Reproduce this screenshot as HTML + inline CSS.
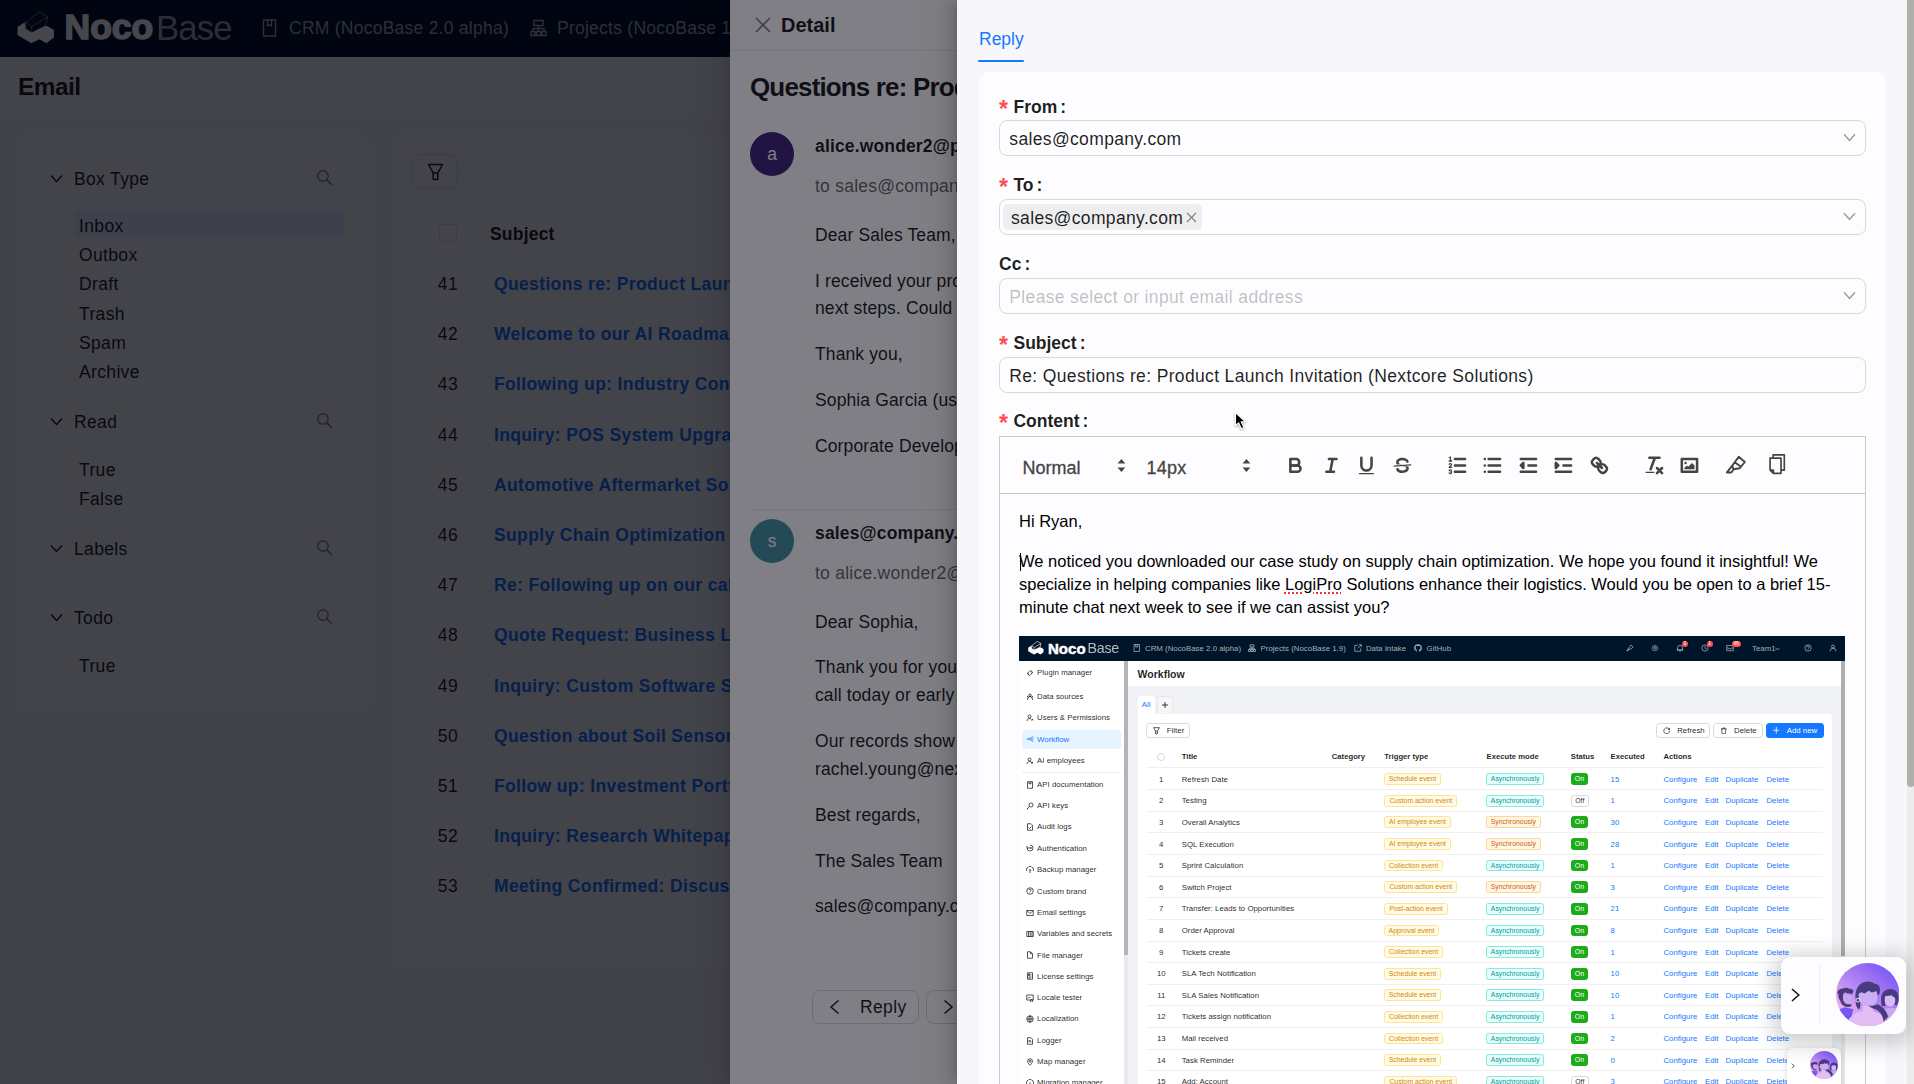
<!DOCTYPE html>
<html lang="en">
<head>
<meta charset="utf-8">
<title>NocoBase - Email</title>
<style>
*{box-sizing:border-box;margin:0;padding:0}
html,body{width:1914px;height:1084px;overflow:hidden;background:#f0f2f5}
body{font-family:"Liberation Sans",sans-serif;font-size:17.5px;color:rgba(0,0,0,.88);position:relative;letter-spacing:.35px}
.abs{position:absolute}
.t{position:absolute;white-space:nowrap;line-height:1}
b,.b{font-weight:700;letter-spacing:0}
svg{display:block}
/* ---------- base page ---------- */
#base{position:absolute;left:0;top:0;width:1914px;height:1084px;background:#f0f2f5}
#hdr{position:absolute;left:0;top:0;width:1914px;height:57px;background:#001529}
#hdr .t{color:rgba(255,255,255,.65)}
.card{position:absolute;background:#f5f6f9;border-radius:10px}
.mask{position:absolute;left:0;top:0;width:1914px;height:1084px;background:rgba(0,0,0,.45)}
.lnk{color:#1677ff;font-weight:700;letter-spacing:0}
#base>.t{margin-top:2px}#detail>.t,#hdr .t{margin-top:1.400px}
/* ---------- detail drawer ---------- */
#detail{position:absolute;left:730px;top:0;width:1184px;height:1084px;background:#fff;box-shadow:-6px 0 16px 0 rgba(0,0,0,.08),-3px 0 6px -4px rgba(0,0,0,.12),-9px 0 28px 8px rgba(0,0,0,.05)}
/* ---------- reply drawer ---------- */
#reply{position:absolute;left:957px;top:0;width:957px;height:1084px;background:#f7f7fa;overflow:hidden;box-shadow:-6px 0 16px 0 rgba(0,0,0,.14),-3px 0 6px -4px rgba(0,0,0,.14),-9px 0 28px 8px rgba(0,0,0,.06)}
#rcard{position:absolute;left:22px;top:72px;width:907px;height:1100px;background:#fdfdff;border-radius:10px}
.lab{position:absolute;left:42px;font-weight:700;letter-spacing:0;white-space:nowrap;line-height:1;font-size:17.5px}
.lab{margin-top:.7px}
.lab i{font-style:normal;color:#ff4d4f;font-weight:700;margin-right:5.500px;font-size:23px;line-height:0;position:relative;top:4.300px}
.lab s{text-decoration:none;margin-left:3px}
.sel{position:absolute;left:42px;width:867px;height:35.500px;margin-top:.3px;border:1px solid #d9d9d9;border-radius:8px;background:#fdfdff}
.sel .t{left:9.300px;top:9.300px}
.chev{position:absolute;right:9px;top:12.200px}
#editor{position:absolute;left:42px;top:436px;width:867px;height:700px;border:1px solid #ccc;letter-spacing:0}
#tb{position:absolute;left:0;top:0;width:865px;height:57px;border-bottom:1.500px solid #c6c6c6}
#ed{position:absolute;left:0;top:0;width:865px;height:700px;font-size:16.5px}
#ed p{position:absolute;left:19px;white-space:nowrap;line-height:23px;height:23px;margin-top:-11.500px;color:#000}
#ed p u{text-decoration:underline dotted #e33;text-decoration-thickness:1.500px;text-underline-offset:3px}
#shot{position:absolute;left:19px;top:199px;width:826px;height:520px;background:#fff;overflow:hidden}
#sb{position:absolute;left:949.500px;top:0;width:8px;height:1084px;background:#ececec}
#sb div{width:8px;height:787px;background:#b0b0aa;border-radius:0 0 4px 4px}
#ai{position:absolute;left:824px;top:957px;width:125px;height:76.500px;background:#fdfdff;border-radius:9px;box-shadow:0 4px 22px 6px rgba(0,0,0,.2)}
#shot{letter-spacing:.03px;color:rgba(0,0,0,.88)}
.tg{position:absolute;height:11.800px;border-radius:2.500px;font-size:6.900px;line-height:10.800px;text-align:center;white-space:nowrap;letter-spacing:0;border:.6px solid}
.tg.gold{background:#fffbe6;border-color:#ffe58f;color:#d48806}
.tg.cyan{background:#e6fffb;border-color:#87e8de;color:#08979c}
.tg.org{background:#fff7e6;border-color:#ffd591;color:#d4580a}
.tg.on{background:#1aad19;border-color:#1aad19;color:#fff}
.tg.off{background:#fff;border-color:#d9d9d9;color:rgba(0,0,0,.88)}
</style>
</head>
<body>
<div id="base">
  <div id="hdr">
    <svg class="abs" style="left:0;top:0" width="60" height="57" viewBox="0 0 60 57"><path d="M17.500 26.900 24.700 22.200 25.700 28.800 31.600 32.600 45.100 26 47.600 26.300 53.900 30.100V37.600L46.400 43.200 39.500 39.200 31.300 43.200 17.500 35.100Z" fill="#fff"/><path d="M25.700 22.500 38.800 11.900 47.600 16.900 45.700 25.700 31.600 32.600 25.700 28.800ZM25.700 22.500 31.800 26.500 47.600 16.900M31.800 26.500 31.600 32.600" fill="none" stroke="rgba(255,255,255,.45)" stroke-width=".9" stroke-linejoin="round"/></svg>
    <div class="t" style="left:64.500px;top:8.800px;font-size:35.500px;font-weight:700;letter-spacing:0;color:#fff;-webkit-text-stroke:1.5px #fff">Noco</div>
    <div class="t" style="left:156px;top:8.800px;font-size:35px;font-weight:400;letter-spacing:-1px;color:#fff;opacity:.62">Base</div>
    <svg class="abs" style="left:262px;top:19px" width="15" height="18" viewBox="0 0 15 18"><path d="M1.5 1h12v16h-12z" fill="none" stroke="rgba(255,255,255,.65)" stroke-width="1.4"/><path d="M5.5 1v6l2-1.5 2 1.5V1" fill="none" stroke="rgba(255,255,255,.65)" stroke-width="1.3"/></svg>
    <div class="t" style="left:289px;top:19px;letter-spacing:.25px">CRM (NocoBase 2.0 alpha)</div>
    <svg class="abs" style="left:530px;top:19px" width="17" height="18" viewBox="0 0 17 18"><g fill="none" stroke="rgba(255,255,255,.65)" stroke-width="1.4"><path d="M4 1.5h9v5H4zM1 12.5h4v4H1zM6.500 12.500h4v4h-4zM12 12.500h4v4h-4zM8.500 6.500v6M3 12.500v-3h11v3"/></g></svg>
    <div class="t" style="left:557px;top:19px;letter-spacing:.25px">Projects (NocoBase 1.9)</div>
  </div>
  <div class="abs" style="left:0;top:57px;width:1914px;height:58px;background:#f5f6f9"></div>
  <div class="t b" style="left:18px;top:73px;font-size:24.5px;letter-spacing:-.6px">Email</div>
  <div class="card" style="left:18px;top:135px;width:352px;height:575px"></div>
  <div class="card" style="left:392px;top:135px;width:1504px;height:833px"></div>
<svg class="abs" style="left:50px;top:173.5px" width="13" height="9" viewBox="0 0 13 9"><path d="M1 1.500 6.500 7.500 12 1.500" fill="none" stroke="rgba(0,0,0,.88)" stroke-width="1.4"/></svg><div class="t" style="left:74px;top:168.5px">Box Type</div><svg class="abs" style="left:316px;top:168.5px" width="17" height="17" viewBox="0 0 17 17"><circle cx="7" cy="7" r="5.200" fill="none" stroke="rgba(0,0,0,.45)" stroke-width="1.4"/><path d="M11 11l5 5" stroke="rgba(0,0,0,.45)" stroke-width="1.6"/></svg>
<svg class="abs" style="left:50px;top:417px" width="13" height="9" viewBox="0 0 13 9"><path d="M1 1.500 6.500 7.500 12 1.500" fill="none" stroke="rgba(0,0,0,.88)" stroke-width="1.4"/></svg><div class="t" style="left:74px;top:412px">Read</div><svg class="abs" style="left:316px;top:412px" width="17" height="17" viewBox="0 0 17 17"><circle cx="7" cy="7" r="5.200" fill="none" stroke="rgba(0,0,0,.45)" stroke-width="1.4"/><path d="M11 11l5 5" stroke="rgba(0,0,0,.45)" stroke-width="1.6"/></svg>
<svg class="abs" style="left:50px;top:544px" width="13" height="9" viewBox="0 0 13 9"><path d="M1 1.500 6.500 7.500 12 1.500" fill="none" stroke="rgba(0,0,0,.88)" stroke-width="1.4"/></svg><div class="t" style="left:74px;top:539px">Labels</div><svg class="abs" style="left:316px;top:539px" width="17" height="17" viewBox="0 0 17 17"><circle cx="7" cy="7" r="5.200" fill="none" stroke="rgba(0,0,0,.45)" stroke-width="1.4"/><path d="M11 11l5 5" stroke="rgba(0,0,0,.45)" stroke-width="1.6"/></svg>
<svg class="abs" style="left:50px;top:613px" width="13" height="9" viewBox="0 0 13 9"><path d="M1 1.500 6.500 7.500 12 1.500" fill="none" stroke="rgba(0,0,0,.88)" stroke-width="1.4"/></svg><div class="t" style="left:74px;top:608px">Todo</div><svg class="abs" style="left:316px;top:608px" width="17" height="17" viewBox="0 0 17 17"><circle cx="7" cy="7" r="5.200" fill="none" stroke="rgba(0,0,0,.45)" stroke-width="1.4"/><path d="M11 11l5 5" stroke="rgba(0,0,0,.45)" stroke-width="1.6"/></svg>
<div class="abs" style="left:75px;top:211px;width:270px;height:27px;background:#dcefff;border-radius:4px"></div>
<div class="t" style="left:79px;top:216px">Inbox</div>
<div class="t" style="left:79px;top:245px">Outbox</div>
<div class="t" style="left:79px;top:274px">Draft</div>
<div class="t" style="left:79px;top:303.5px">Trash</div>
<div class="t" style="left:79px;top:332.5px">Spam</div>
<div class="t" style="left:79px;top:361.5px">Archive</div>
<div class="t" style="left:79px;top:460px">True</div>
<div class="t" style="left:79px;top:489px">False</div>
<div class="t" style="left:79px;top:655.5px">True</div>
<div class="abs" style="left:412px;top:154px;width:46px;height:35px;border:1px solid #d9d9d9;border-radius:8px"></div>
<svg class="abs" style="left:427px;top:163px" width="17" height="18" viewBox="0 0 17 18"><path d="M1.500 1.500h14l-4.700 8.500v6.500H6.200V10Z M6.200 10h4.600" fill="none" stroke="rgba(0,0,0,.88)" stroke-width="1.5" stroke-linejoin="round"/></svg>
<div class="abs" style="left:412px;top:208px;width:1464px;height:50px;background:#f5f6f9;border-bottom:1px solid #eceef1"></div>
<div class="abs" style="left:439px;top:224px;width:18px;height:18px;border:1px solid #d9d9d9;border-radius:4px;background:#f8f9fb"></div>
<div class="t b" style="left:490px;top:224px;letter-spacing:.2px">Subject</div>
<div class="t" style="left:428px;width:40px;text-align:center;top:274px;letter-spacing:.4px">41</div><div class="t lnk" style="left:494px;top:274px;letter-spacing:.36px">Questions re: Product Launch Invitation (Nextcore Solutions)</div><div class="abs" style="left:412px;top:308px;width:1464px;height:1px;background:#eceef1"></div>
<div class="t" style="left:428px;width:40px;text-align:center;top:324px;letter-spacing:.4px">42</div><div class="t lnk" style="left:494px;top:324px;letter-spacing:.36px">Welcome to our AI Roadmap Webinar Series</div><div class="abs" style="left:412px;top:358px;width:1464px;height:1px;background:#eceef1"></div>
<div class="t" style="left:428px;width:40px;text-align:center;top:374px;letter-spacing:.4px">43</div><div class="t lnk" style="left:494px;top:374px;letter-spacing:.36px">Following up: Industry Conference Connection</div><div class="abs" style="left:412px;top:408px;width:1464px;height:1px;background:#eceef1"></div>
<div class="t" style="left:428px;width:40px;text-align:center;top:425px;letter-spacing:.4px">44</div><div class="t lnk" style="left:494px;top:425px;letter-spacing:.36px">Inquiry: POS System Upgrade for Retail Chain</div><div class="abs" style="left:412px;top:459px;width:1464px;height:1px;background:#eceef1"></div>
<div class="t" style="left:428px;width:40px;text-align:center;top:475px;letter-spacing:.4px">45</div><div class="t lnk" style="left:494px;top:475px;letter-spacing:.36px">Automotive Aftermarket Solutions Partnership</div><div class="abs" style="left:412px;top:509px;width:1464px;height:1px;background:#eceef1"></div>
<div class="t" style="left:428px;width:40px;text-align:center;top:525px;letter-spacing:.4px">46</div><div class="t lnk" style="left:494px;top:525px;letter-spacing:.36px">Supply Chain Optimization Case Study</div><div class="abs" style="left:412px;top:559px;width:1464px;height:1px;background:#eceef1"></div>
<div class="t" style="left:428px;width:40px;text-align:center;top:575px;letter-spacing:.4px">47</div><div class="t lnk" style="left:494px;top:575px;letter-spacing:.36px">Re: Following up on our call last week</div><div class="abs" style="left:412px;top:609px;width:1464px;height:1px;background:#eceef1"></div>
<div class="t" style="left:428px;width:40px;text-align:center;top:625px;letter-spacing:.4px">48</div><div class="t lnk" style="left:494px;top:625px;letter-spacing:.36px">Quote Request: Business Liability Insurance</div><div class="abs" style="left:412px;top:659px;width:1464px;height:1px;background:#eceef1"></div>
<div class="t" style="left:428px;width:40px;text-align:center;top:676px;letter-spacing:.4px">49</div><div class="t lnk" style="left:494px;top:676px;letter-spacing:.36px">Inquiry: Custom Software Solutions</div><div class="abs" style="left:412px;top:710px;width:1464px;height:1px;background:#eceef1"></div>
<div class="t" style="left:428px;width:40px;text-align:center;top:726px;letter-spacing:.4px">50</div><div class="t lnk" style="left:494px;top:726px;letter-spacing:.36px">Question about Soil Sensor Integration</div><div class="abs" style="left:412px;top:760px;width:1464px;height:1px;background:#eceef1"></div>
<div class="t" style="left:428px;width:40px;text-align:center;top:776px;letter-spacing:.4px">51</div><div class="t lnk" style="left:494px;top:776px;letter-spacing:.36px">Follow up: Investment Portfolio Review</div><div class="abs" style="left:412px;top:810px;width:1464px;height:1px;background:#eceef1"></div>
<div class="t" style="left:428px;width:40px;text-align:center;top:826px;letter-spacing:.4px">52</div><div class="t lnk" style="left:494px;top:826px;letter-spacing:.36px">Inquiry: Research Whitepaper Access</div><div class="abs" style="left:412px;top:860px;width:1464px;height:1px;background:#eceef1"></div>
<div class="t" style="left:428px;width:40px;text-align:center;top:876px;letter-spacing:.4px">53</div><div class="t lnk" style="left:494px;top:876px;letter-spacing:.36px">Meeting Confirmed: Discussion on Q3 Goals</div><div class="abs" style="left:412px;top:910px;width:1464px;height:1px;background:#eceef1"></div>
</div>
<div class="mask"></div>
<div id="detail">
  <svg class="abs" style="left:25px;top:17px" width="16" height="16" viewBox="0 0 16 16"><path d="M1 1l14 14M15 1 1 15" stroke="rgba(0,0,0,.5)" stroke-width="1.6" fill="none"/></svg>
  <div class="t b" style="left:51px;top:14px;font-size:20px">Detail</div>
  <div class="abs" style="left:0;top:50px;width:1184px;height:1px;background:rgba(5,5,5,.08)"></div>
  <div class="t b" style="left:20px;top:73px;font-size:26px;letter-spacing:-.85px">Questions re: Product Launch Invitation (Nextcore Solutions)</div>
  <div class="abs" style="left:20px;top:132px;width:44px;height:44px;border-radius:50%;background:#42277c"></div>
  <div class="t" style="left:20px;top:144.700px;width:44px;text-align:center;color:#fff;font-size:17.500px;letter-spacing:0">a</div>
  <div class="t b" style="left:85px;top:137px;letter-spacing:.15px">alice.wonder2@partner.com</div>
  <div class="t" style="left:85px;top:177px;color:rgba(0,0,0,.62);letter-spacing:.25px">to sales@company.com</div>
  <div class="t" style="left:85px;top:226px;letter-spacing:.12px">Dear Sales Team,</div>
  <div class="t" style="left:85px;top:272px;letter-spacing:.12px">I received your product launch invitation and had a few questions about</div>
  <div class="t" style="left:85px;top:299px;letter-spacing:.12px">next steps. Could you share more details?</div>
  <div class="t" style="left:85px;top:345px;letter-spacing:.12px">Thank you,</div>
  <div class="t" style="left:85px;top:391px;letter-spacing:.12px">Sophia Garcia (using Alice’s address)</div>
  <div class="t" style="left:85px;top:437px;letter-spacing:.12px">Corporate Development</div>
  <div class="abs" style="left:20px;top:509px;width:1144px;height:1px;background:rgba(5,5,5,.08)"></div>
  <div class="abs" style="left:20px;top:519px;width:44px;height:44px;border-radius:50%;background:#4a94a2"></div>
  <div class="t" style="left:20px;top:531.200px;width:44px;text-align:center;color:#fff;font-size:17.500px;letter-spacing:0">s</div>
  <div class="t b" style="left:85px;top:524px;letter-spacing:.15px">sales@company.com</div>
  <div class="t" style="left:85px;top:564px;color:rgba(0,0,0,.62);letter-spacing:.25px">to alice.wonder2@partner.com</div>
  <div class="t" style="left:85px;top:613px;letter-spacing:.12px">Dear Sophia,</div>
  <div class="t" style="left:85px;top:658px;letter-spacing:.12px">Thank you for your interest. We would be happy to set up a</div>
  <div class="t" style="left:85px;top:686px;letter-spacing:.12px">call today or early next week to walk you through it.</div>
  <div class="t" style="left:85px;top:732px;letter-spacing:.12px">Our records show your colleague</div>
  <div class="t" style="left:85px;top:760px;letter-spacing:.12px">rachel.young@nextcore.com</div>
  <div class="t" style="left:85px;top:806px;letter-spacing:.12px">Best regards,</div>
  <div class="t" style="left:85px;top:852px;letter-spacing:.12px">The Sales Team</div>
  <div class="t" style="left:85px;top:897px;letter-spacing:.12px">sales@company.com</div>
  <div class="abs" style="left:82px;top:990px;width:107px;height:34px;border:1px solid #d9d9d9;border-radius:8px"></div>
  <svg class="abs" style="left:99px;top:999px" width="11" height="16" viewBox="0 0 11 16"><path d="M9.500 1.500 2 8l7.500 6.500" fill="none" stroke="rgba(0,0,0,.88)" stroke-width="1.5"/></svg>
  <div class="t" style="left:130px;top:998px">Reply</div>
  <div class="abs" style="left:196px;top:990px;width:125px;height:34px;border:1px solid #d9d9d9;border-radius:8px"></div>
  <svg class="abs" style="left:213px;top:999px" width="11" height="16" viewBox="0 0 11 16"><path d="M1.500 1.500 9 8l-7.500 6.500" fill="none" stroke="rgba(0,0,0,.88)" stroke-width="1.5"/></svg>
  <div class="t" style="left:240px;top:998px">Forward</div>
</div>
<div class="mask" style="background:rgba(0,0,12,.5)"></div>
<div id="reply">
  <div class="t" style="left:22px;top:30.500px;color:#1677ff;letter-spacing:0">Reply</div>
  <div class="abs" style="left:21.400px;top:59.700px;width:46px;height:2.300px;background:#1677ff;border-radius:1px"></div>
  <div id="rcard"></div>
  <div class="lab" style="top:98px"><i>*</i>From<s>:</s></div>
  <div class="lab" style="top:176px"><i>*</i>To<s>:</s></div>
  <div class="lab" style="top:255px">Cc<s>:</s></div>
  <div class="lab" style="top:334px"><i>*</i>Subject<s>:</s></div>
  <div class="lab" style="top:412px"><i>*</i>Content<s>:</s></div>
  <div class="sel" style="top:120px"><div class="t">sales@company.com</div><svg class="chev" width="13" height="9" viewBox="0 0 13 9"><path d="M1 1.200 6.500 7.500 12 1.200" fill="none" stroke="rgba(0,0,0,.4)" stroke-width="1.300"/></svg></div>
  <div class="sel" style="top:199px"><div class="abs" style="left:3px;top:4px;width:199px;height:26px;border-radius:5px;background:rgba(0,0,0,.06)"></div><div class="t" style="left:11px">sales@company.com</div><svg class="abs" style="left:186px;top:12px" width="11" height="11" viewBox="0 0 11 11"><path d="M1 1l9 9M10 1 1 10" stroke="rgba(0,0,0,.45)" stroke-width="1.200"/></svg><svg class="chev" width="13" height="9" viewBox="0 0 13 9"><path d="M1 1.200 6.500 7.500 12 1.200" fill="none" stroke="rgba(0,0,0,.4)" stroke-width="1.300"/></svg></div>
  <div class="sel" style="top:278px"><div class="t" style="color:rgba(0,0,0,.25)">Please select or input email address</div><svg class="chev" width="13" height="9" viewBox="0 0 13 9"><path d="M1 1.200 6.500 7.500 12 1.200" fill="none" stroke="rgba(0,0,0,.4)" stroke-width="1.300"/></svg></div>
  <div class="sel" style="top:357px"><div class="t">Re: Questions re: Product Launch Invitation (Nextcore Solutions)</div></div>
  <div id="editor">
    <div id="tb"><svg class="abs" style="left:283.8px;top:16.9px" width="22.9" height="22.9" viewBox="0 0 18 18"><path stroke="#444" stroke-width="2" fill="none" stroke-linecap="round" stroke-linejoin="round" d="M5,4H9.500A2.500,2.500,0,0,1,12,6.500v0A2.500,2.500,0,0,1,9.500,9H5V4Z"/><path stroke="#444" stroke-width="2" fill="none" stroke-linecap="round" stroke-linejoin="round" d="M5,9h5.500A2.500,2.500,0,0,1,13,11.500v0A2.500,2.500,0,0,1,10.500,14H5V9Z"/></svg><svg class="abs" style="left:319.6px;top:16.9px" width="22.9" height="22.9" viewBox="0 0 18 18"><path stroke="#444" stroke-width="2" fill="none" stroke-linecap="round" stroke-linejoin="round" d="M7 4h6M5 14h6M8 14 10 4"/></svg><svg class="abs" style="left:355.3px;top:16.9px" width="22.9" height="22.9" viewBox="0 0 18 18"><path stroke="#444" stroke-width="2" fill="none" stroke-linecap="round" stroke-linejoin="round" d="M5,3V9a4.012,4.012,0,0,0,4,4H9a4.012,4.012,0,0,0,4-4V3"/><rect fill="#444" height="1" rx="0.500" ry="0.500" width="12" x="3" y="15"/></svg><svg class="abs" style="left:390.8px;top:16.9px" width="22.9" height="22.9" viewBox="0 0 18 18"><path stroke="#444" stroke-width="1" fill="none" stroke-linecap="round" stroke-linejoin="round" d="M15.500 8.500 2.500 9.500"/><path fill="#444" d="M9.007,8C6.542,7.791,6,7.519,6,6.500,6,5.792,7.283,5,9,5c1.571,0,2.765.679,2.969,1.309a1,1,0,0,0,1.900-.617C13.356,4.106,11.354,3,9,3,6.200,3,4,4.538,4,6.500a3.200,3.200,0,0,0,.5,1.843Z"/><path fill="#444" d="M8.984,10C11.457,10.208,12,10.479,12,11.500c0,0.708-1.283,1.500-3,1.500-1.571,0-2.765-.679-2.969-1.309a1,1,0,1,0-1.900.617C4.644,13.894,6.646,15,9,15c2.800,0,5-1.538,5-3.500a3.200,3.200,0,0,0-.5-1.843Z"/></svg><svg class="abs" style="left:445.6px;top:16.9px" width="22.9" height="22.9" viewBox="0 0 18 18"><path stroke="#444" stroke-width="2" fill="none" stroke-linecap="round" stroke-linejoin="round" d="M7 4h8M7 9h8M7 14h8"/><path stroke="#444" stroke-width="1" fill="none" stroke-linecap="round" stroke-linejoin="round" d="M2.500 5.500h2"/><path fill="#444" d="M3.500,6A0.500,0.500,0,0,1,3,5.500V3.085l-0.276.138A0.500,0.500,0,0,1,2.053,3c-0.124-.247-0.023-0.324.224-0.447l1-.5A0.500,0.500,0,0,1,4,2.500v3A0.500,0.500,0,0,1,3.500,6Z"/><path stroke="#444" stroke-width="1" fill="none" stroke-linecap="round" stroke-linejoin="round" d="M4.500,10.500h-2c0-.234,1.850-1.076,1.850-2.234A0.959,0.959,0,0,0,2.500,8.156"/><path stroke="#444" stroke-width="1" fill="none" stroke-linecap="round" stroke-linejoin="round" d="M2.500,14.846a0.959,0.959,0,0,0,1.850-.109A0.700,0.700,0,0,0,3.750,14a0.688,0.688,0,0,0,.6-0.736,0.959,0.959,0,0,0-1.850-.109"/></svg><svg class="abs" style="left:481.1px;top:16.9px" width="22.9" height="22.9" viewBox="0 0 18 18"><path stroke="#444" stroke-width="2" fill="none" stroke-linecap="round" stroke-linejoin="round" d="M6 4h9M6 9h9M6 14h9M3 4h0M3 9h0M3 14h0"/></svg><svg class="abs" style="left:516.5px;top:16.9px" width="22.9" height="22.9" viewBox="0 0 18 18"><path stroke="#444" stroke-width="2" fill="none" stroke-linecap="round" stroke-linejoin="round" d="M3 14h12M3 4h12M9 9h6"/><path stroke="#444" stroke-width="2" fill="none" stroke-linecap="round" stroke-linejoin="round" d="M5 7v4L3 9Z"/></svg><svg class="abs" style="left:552.3px;top:16.9px" width="22.9" height="22.9" viewBox="0 0 18 18"><path stroke="#444" stroke-width="2" fill="none" stroke-linecap="round" stroke-linejoin="round" d="M3 14h12M3 4h12M9 9h6"/><path stroke="#444" stroke-width="2" fill="none" stroke-linecap="round" stroke-linejoin="round" fill="#444" d="M3 7v4l2-2Z" style="fill:#444"/></svg><svg class="abs" style="left:587.8px;top:16.9px" width="22.9" height="22.9" viewBox="0 0 18 18"><path stroke="#444" stroke-width="2" fill="none" stroke-linecap="round" stroke-linejoin="round" d="M7 7l4 4"/><path stroke="#444" stroke-width="2" fill="none" stroke-linecap="round" stroke-linejoin="round" d="M8.900,4.577a3.476,3.476,0,0,1,.36,4.679A3.476,3.476,0,0,1,4.577,8.900C3.185,7.500,2.035,6.400,4.217,4.217S7.500,3.185,8.900,4.577Z"/><path stroke="#444" stroke-width="2" fill="none" stroke-linecap="round" stroke-linejoin="round" d="M13.423,9.100a3.476,3.476,0,0,0-4.679-.36,3.476,3.476,0,0,0,.36,4.679c1.392,1.392,2.500,2.542,4.679.36S14.815,10.500,13.423,9.100Z"/></svg><svg class="abs" style="left:642.8px;top:16.9px" width="22.9" height="22.9" viewBox="0 0 18 18"><path stroke="#444" stroke-width="2" fill="none" stroke-linecap="round" stroke-linejoin="round" d="M5 3h8M6 12 9.350 3M11 11l4 4M15 11l-4 4"/><rect fill="#444" height="1" rx="0.500" ry="0.500" width="7" x="2" y="14"/></svg><svg class="abs" style="left:677.8px;top:16.9px" width="22.9" height="22.9" viewBox="0 0 18 18"><rect stroke="#444" stroke-width="2" fill="none" stroke-linecap="round" stroke-linejoin="round" height="10" width="12" x="3" y="4"/><circle fill="#444" cx="6" cy="7" r="1"/><path fill="#444" d="M5 12V11L7 9 8 10 11 7 13 9V12Z"/></svg><svg class="abs" style="left:724.8px;top:16.9px" width="22.9" height="22.9" viewBox="0 0 18 18"><path stroke="#444" stroke-width="1.500" fill="none" stroke-linejoin="round" d="M10.800 2.200 15.600 6.300 11.600 11.200 6.800 12 5.600 9.300Z M7.700 6.500 12.600 10.100 M6.800 12 5 14.500H1.500L5.600 9.300"/></svg><svg class="abs" style="left:765.5px;top:15.1px" width="22.9" height="22.9" viewBox="0 0 18 18"><path stroke="#444" stroke-width="1.300" fill="none" stroke-linejoin="round" d="M3.200 4.800h8.600v12H5.800L3.200 14.200Z M5.800 16.800v-2.600H3.200 M5.600 4.800V2.300h8.800v12h-2.600"/></svg><svg class="abs" style="left:110.3px;top:16.9px" width="22.9" height="22.9" viewBox="0 0 18 18"><path fill="#444" d="M5 7.200 9 3 13 7.200Z M5 10.800 9 15 13 10.800Z" transform="translate(9 9) scale(.76 .86) translate(-9 -9)"/></svg><svg class="abs" style="left:235.0px;top:16.9px" width="22.9" height="22.9" viewBox="0 0 18 18"><path fill="#444" d="M5 7.200 9 3 13 7.200Z M5 10.800 9 15 13 10.800Z" transform="translate(9 9) scale(.76 .86) translate(-9 -9)"/></svg><div class="t" style="left:22.500px;top:21.500px;font-size:18px;color:#444;-webkit-text-stroke:.3px #444">Normal</div><div class="t" style="left:146.500px;top:21.500px;font-size:18px;color:#444;-webkit-text-stroke:.3px #444;letter-spacing:.2px">14px</div></div>
    <div id="ed">
      <p style="top:84px">Hi Ryan,</p>
      <p style="top:124px">We noticed you downloaded our case study on supply chain optimization. We hope you found it insightful! We</p>
      <p style="top:147px">specialize in helping companies like <u>LogiPro</u> Solutions enhance their logistics. Would you be open to a brief 15-</p>
      <p style="top:170px">minute chat next week to see if we can assist you?</p>
      <div class="abs" style="left:20px;top:116px;width:1px;height:18px;background:#000"></div>
      <div id="shot"><!--S--><div class="abs" style="left:0px;top:0px;width:826.6px;height:464px;background:#f0f2f5"></div><div class="abs" style="left:0px;top:0px;width:826.6px;height:24.8px;background:#001529"></div><div class="abs" style="left:0px;top:24.8px;width:105.3px;height:439.2px;background:#fff"></div><div class="abs" style="left:105.3px;top:24.8px;width:3.7px;height:439.2px;background:#e9e9e9"></div><div class="abs" style="left:105.3px;top:24.8px;width:3.7px;height:294.2px;background:#b4b4b4"></div><div class="abs" style="left:109px;top:24.8px;width:713px;height:25.5px;background:#fff"></div><div class="abs" style="left:822px;top:24.8px;width:4.6px;height:439.2px;background:#e9e9e9"></div><div class="abs" style="left:822px;top:24.8px;width:4.6px;height:295.2px;background:#aeaeae"></div><div class="abs" style="left:118.6px;top:77.6px;width:694.9px;height:386.4px;background:#fff;border-radius:0 4px 0 0"></div><div class="abs" style="left:118.6px;top:59.5px;width:17.7px;height:18.5px;background:#fff;border-radius:3px 3px 0 0"></div><div class="abs" style="left:137.5px;top:59.5px;width:16.5px;height:17.7px;background:#f7f7f8;border-radius:3px 3px 0 0;border:.5px solid #e8e8e8;border-bottom:0"></div><svg class="abs" style="left:8.6px;top:5.3px" width="16" height="13.900" viewBox="17 11 38 33"><path d="M17.500 26.900 24.700 22.200 25.700 28.800 31.600 32.600 45.100 26 47.600 26.300 53.900 30.100V37.600L46.400 43.200 39.500 39.200 31.300 43.200 17.500 35.100Z" fill="#fff"/><path d="M25.700 22.500 38.800 11.900 47.600 16.900 45.700 25.700 31.600 32.600 25.700 28.800ZM25.700 22.500 31.800 26.500 47.600 16.900M31.800 26.500 31.600 32.600" fill="none" stroke="rgba(255,255,255,.9)" stroke-width="1.600" stroke-linejoin="round"/></svg><div class="t" style="left:29px;top:4.5px;font-size:15px;color:#fff;font-weight:700;-webkit-text-stroke:.5px #fff">Noco</div><div class="t" style="left:68.5px;top:4.9px;font-size:14.3px;color:#fff;opacity:.7;letter-spacing:-.3px">Base</div><svg class="abs" style="left:113.8px;top:8.4px" width="8" height="8" viewBox="0 0 16 16"><path stroke="rgba(255,255,255,.65)" stroke-width="1.500" fill="none" d="M2 1h11v14H2zM5.500 1v5.500l2-1.500 2 1.500V1"/></svg><div class="t" style="left:126px;top:8.6px;font-size:7.8px;color:rgba(255,255,255,.65)">CRM (NocoBase 2.0 alpha)</div><svg class="abs" style="left:229px;top:8.4px" width="8" height="8" viewBox="0 0 16 16"><path stroke="rgba(255,255,255,.65)" stroke-width="1.500" fill="none" d="M4 1.500h8v4.500H4zM1 11h4v4H1zM6 11h4v4H6zM11 11h4v4h-4zM8 6v5M3 11V8.500h10V11"/></svg><div class="t" style="left:241.6px;top:8.6px;font-size:7.8px;color:rgba(255,255,255,.65)">Projects (NocoBase 1.9)</div><svg class="abs" style="left:334.5px;top:8.4px" width="8" height="8" viewBox="0 0 16 16"><path stroke="rgba(255,255,255,.65)" stroke-width="1.500" fill="none" d="M13.500 8.500V14.500H1.500V2.500H7.500M9.500 1.500H14.500V6.500M14.500 1.500 7.500 8.500"/></svg><div class="t" style="left:346.9px;top:8.6px;font-size:7.8px;color:rgba(255,255,255,.65)">Data Intake</div><svg class="abs" style="left:395.3px;top:8.4px" width="8" height="8" viewBox="0 0 16 16"><path fill="rgba(255,255,255,.65)" d="M8 .3a7.800 7.800 0 0 0-2.500 15.200c.4.100.5-.2.500-.4v-1.400c-2.200.5-2.600-1-2.600-1-.4-.9-.9-1.100-.9-1.100-.7-.5.100-.5.100-.5.800.100 1.200.8 1.200.8.700 1.200 1.800.9 2.300.7.100-.5.300-.9.500-1.100-1.700-.2-3.600-.9-3.600-3.900 0-.9.300-1.600.8-2.100-.1-.2-.4-1 .1-2.100 0 0 .7-.2 2.200.8a7.500 7.500 0 0 1 4 0c1.500-1 2.200-.8 2.200-.8.400 1.100.2 1.900.1 2.100.5.600.8 1.300.8 2.100 0 3-1.800 3.700-3.600 3.900.3.200.5.700.5 1.500v2.100c0 .2.100.5.500.4A7.800 7.800 0 0 0 8 .3Z"/></svg><div class="t" style="left:407.6px;top:8.6px;font-size:7.8px;color:rgba(255,255,255,.65)">GitHub</div><svg class="abs" style="left:606.5px;top:8.4px" width="8" height="8" viewBox="0 0 16 16"><path stroke="rgba(255,255,255,.65)" stroke-width="1.500" fill="none" d="M10 2 14 5.500 10.500 10 6 11 5 8.500ZM6 11 4.500 13.500H1.500L5 8.500"/></svg><svg class="abs" style="left:631.7px;top:8.4px" width="8" height="8" viewBox="0 0 16 16"><circle stroke="rgba(255,255,255,.65)" stroke-width="1.500" fill="none" cx="8" cy="8" r="2.300"/><path stroke="rgba(255,255,255,.65)" stroke-width="1.500" fill="none" d="M8 1.500l1.300 1.700 2.100-.4.700 2 2 .8-.6 2.100 1 1.800-1.700 1.300-.2 2.100-2.100.2L9 15l-1.900-1-2 .7-1.100-1.800-2.100-.5.200-2.100L.8 8.500 2.200 7l-.3-2.100 2-.7L4.800 2.300l2.100.5Z" transform="translate(8 8) scale(.85) translate(-8 -8)"/></svg><svg class="abs" style="left:656.7px;top:8.4px" width="8" height="8" viewBox="0 0 16 16"><path stroke="rgba(255,255,255,.65)" stroke-width="1.500" fill="none" d="M3 12V7.500a5 5 0 0 1 10 0V12ZM1.500 12h13M6.500 14.500h3"/></svg><svg class="abs" style="left:682px;top:8.4px" width="8" height="8" viewBox="0 0 16 16"><circle stroke="rgba(255,255,255,.65)" stroke-width="1.500" fill="none" cx="8" cy="8" r="6.300"/><path stroke="rgba(255,255,255,.65)" stroke-width="1.500" fill="none" d="M8 4v4.300l3 1.700"/></svg><svg class="abs" style="left:707px;top:8.4px" width="8" height="8" viewBox="0 0 16 16"><path stroke="rgba(255,255,255,.65)" stroke-width="1.500" fill="none" d="M1.500 3h13v10.500h-13zM1.500 8h3.500l1 2h4l1-2h3.500"/></svg><svg class="abs" style="left:784.8px;top:8.4px" width="8" height="8" viewBox="0 0 16 16"><circle stroke="rgba(255,255,255,.65)" stroke-width="1.500" fill="none" cx="8" cy="8" r="6.300"/><path stroke="rgba(255,255,255,.65)" stroke-width="1.500" fill="none" d="M5.800 6.300a2.200 2.200 0 1 1 3 2c-.6.300-.8.700-.8 1.400M8 11.300v1.200"/></svg><svg class="abs" style="left:809.5px;top:8.4px" width="8" height="8" viewBox="0 0 16 16"><circle stroke="rgba(255,255,255,.65)" stroke-width="1.500" fill="none" cx="8" cy="5" r="3"/><path stroke="rgba(255,255,255,.65)" stroke-width="1.500" fill="none" d="M2 14.500a6 6 0 0 1 12 0"/></svg><div class="abs" style="left:662.7px;top:4.5px;width:6px;height:6px;border-radius:3px;background:#ff4d4f;color:#fff;font-size:4.500px;line-height:6px;text-align:center;letter-spacing:0">3</div><div class="abs" style="left:687.7px;top:4.5px;width:6px;height:6px;border-radius:3px;background:#ff4d4f;color:#fff;font-size:4.500px;line-height:6px;text-align:center;letter-spacing:0">1</div><div class="abs" style="left:712.7px;top:4.5px;width:9px;height:6px;border-radius:3px;background:#ff4d4f;color:#fff;font-size:4.500px;line-height:6px;text-align:center;letter-spacing:0">99</div><div class="t" style="left:733px;top:8.6px;font-size:7.8px;color:rgba(255,255,255,.65)">Team1</div><svg class="abs" style="left:756px;top:11px" width="5" height="4" viewBox="0 0 10 7"><path d="M1 1l4 4.500L9 1" stroke="rgba(255,255,255,.65)" stroke-width="1.500" fill="none"/></svg><div class="abs" style="left:2.5px;top:94px;width:99.5px;height:19px;background:#e6f4ff;border-radius:4px"></div><div class="abs" style="left:2.5px;top:136.3px;width:99.5px;height:0.6px;background:#f0f0f0"></div><svg class="abs" style="left:6.5px;top:33px" width="8" height="8" viewBox="0 0 16 16"><path d="M5 11a3 3 0 0 1 0-4.500l2-2a3 3 0 0 1 4.500 4.500M11 5a3 3 0 0 1 0 4.500l-2 2a3 3 0 0 1-4.500-4.500" stroke="rgba(0,0,0,.88)" stroke-width="1.500" fill="none"/></svg><div class="t" style="left:18.1px;top:33.2px;font-size:7.8px;color:rgba(0,0,0,.88)">Plugin manager</div><svg class="abs" style="left:6.5px;top:56.9px" width="8" height="8" viewBox="0 0 16 16"><path d="M8 2a2.500 2.500 0 1 0 0 5a2.500 2.500 0 1 0 0-5M3 14v-2a5 5 0 0 1 10 0v2M2 6l3 3M14 6l-3 3" stroke="rgba(0,0,0,.88)" stroke-width="1.500" fill="none"/></svg><div class="t" style="left:18.1px;top:57.1px;font-size:7.8px;color:rgba(0,0,0,.88)">Data sources</div><svg class="abs" style="left:6.5px;top:78px" width="8" height="8" viewBox="0 0 16 16"><path d="M7 2a3 3 0 1 0 0 6a3 3 0 1 0 0-6M2 14a5 5 0 0 1 8-4M11 10l3 3M14 10l-3 3" stroke="rgba(0,0,0,.88)" stroke-width="1.500" fill="none"/></svg><div class="t" style="left:18.1px;top:78.2px;font-size:7.8px;color:rgba(0,0,0,.88)">Users &amp; Permissions</div><svg class="abs" style="left:6.5px;top:99.4px" width="8" height="8" viewBox="0 0 16 16"><path d="M1 8h4M5 8a2 2 0 1 0 4 0a2 2 0 1 0-4 0M9 7l3-3h3M9 8h6M9 9l3 3h3" stroke="#1677ff" stroke-width="1.500" fill="none"/></svg><div class="t" style="left:18.1px;top:99.6px;font-size:7.8px;color:#1677ff">Workflow</div><svg class="abs" style="left:6.5px;top:120.8px" width="8" height="8" viewBox="0 0 16 16"><path d="M7 2a3 3 0 1 0 0 6a3 3 0 1 0 0-6M2 14a5 5 0 0 1 8-4M12 9v5M10 11.500h4" stroke="rgba(0,0,0,.88)" stroke-width="1.500" fill="none"/></svg><div class="t" style="left:18.1px;top:121.0px;font-size:7.8px;color:rgba(0,0,0,.88)">AI employees</div><svg class="abs" style="left:6.5px;top:144.7px" width="8" height="8" viewBox="0 0 16 16"><path d="M3 1.500h10v13H3zM6 1.500v4h4v-4" stroke="rgba(0,0,0,.88)" stroke-width="1.500" fill="none"/></svg><div class="t" style="left:18.1px;top:144.9px;font-size:7.8px;color:rgba(0,0,0,.88)">API documentation</div><svg class="abs" style="left:6.5px;top:166px" width="8" height="8" viewBox="0 0 16 16"><path d="M10 2a4 4 0 1 0 0 8a4 4 0 1 0 0-8M7 9l-5 5M2 14h2" stroke="rgba(0,0,0,.88)" stroke-width="1.500" fill="none"/></svg><div class="t" style="left:18.1px;top:166.2px;font-size:7.8px;color:rgba(0,0,0,.88)">API keys</div><svg class="abs" style="left:6.5px;top:187.2px" width="8" height="8" viewBox="0 0 16 16"><path d="M3 1.500h7l3 3v10H3zM5 9l2 2 4-4" stroke="rgba(0,0,0,.88)" stroke-width="1.500" fill="none"/></svg><div class="t" style="left:18.1px;top:187.4px;font-size:7.8px;color:rgba(0,0,0,.88)">Audit logs</div><svg class="abs" style="left:6.5px;top:208.4px" width="8" height="8" viewBox="0 0 16 16"><path d="M8 2a6 6 0 1 1-6 6M2 4v4h4M6 8h5M9 6l2 2-2 2" stroke="rgba(0,0,0,.88)" stroke-width="1.500" fill="none"/></svg><div class="t" style="left:18.1px;top:208.6px;font-size:7.8px;color:rgba(0,0,0,.88)">Authentication</div><svg class="abs" style="left:6.5px;top:230.2px" width="8" height="8" viewBox="0 0 16 16"><path d="M2 10a4 4 0 0 1 2-7a4.500 4.500 0 0 1 8 0a4 4 0 0 1 2 7M8 7v7M6 9l2-2 2 2" stroke="rgba(0,0,0,.88)" stroke-width="1.500" fill="none"/></svg><div class="t" style="left:18.1px;top:230.4px;font-size:7.8px;color:rgba(0,0,0,.88)">Backup manager</div><svg class="abs" style="left:6.5px;top:251.4px" width="8" height="8" viewBox="0 0 16 16"><path d="M8 1.500a6.500 6.500 0 1 0 0 13a6.500 6.500 0 1 0 0-13M6 6a2 2 0 1 1 3 2c-1 .5-1 1-1 2M8 11.500v1" stroke="rgba(0,0,0,.88)" stroke-width="1.500" fill="none"/></svg><div class="t" style="left:18.1px;top:251.6px;font-size:7.8px;color:rgba(0,0,0,.88)">Custom brand</div><svg class="abs" style="left:6.5px;top:272.5px" width="8" height="8" viewBox="0 0 16 16"><path d="M1.500 3h13v10h-13zM1.500 3 8 9l6.500-6" stroke="rgba(0,0,0,.88)" stroke-width="1.500" fill="none"/></svg><div class="t" style="left:18.1px;top:272.7px;font-size:7.8px;color:rgba(0,0,0,.88)">Email settings</div><svg class="abs" style="left:6.5px;top:293.9px" width="8" height="8" viewBox="0 0 16 16"><path d="M1.500 3h13v10h-13zM5 3v10M8.500 3v10M12 3v10" stroke="rgba(0,0,0,.88)" stroke-width="1.500" fill="none"/></svg><div class="t" style="left:18.1px;top:294.1px;font-size:7.8px;color:rgba(0,0,0,.88)">Variables and secrets</div><svg class="abs" style="left:6.5px;top:315.3px" width="8" height="8" viewBox="0 0 16 16"><path d="M3 1.500h6l4 4v9H3zM9 1.500v4h4" stroke="rgba(0,0,0,.88)" stroke-width="1.500" fill="none"/></svg><div class="t" style="left:18.1px;top:315.5px;font-size:7.8px;color:rgba(0,0,0,.88)">File manager</div><svg class="abs" style="left:6.5px;top:336.4px" width="8" height="8" viewBox="0 0 16 16"><path d="M3 1.500h10v13H3zM5 4h3v3H5zM5 10h6M5 12h4M10 5l2 2" stroke="rgba(0,0,0,.88)" stroke-width="1.500" fill="none"/></svg><div class="t" style="left:18.1px;top:336.6px;font-size:7.8px;color:rgba(0,0,0,.88)">License settings</div><svg class="abs" style="left:6.5px;top:357.8px" width="8" height="8" viewBox="0 0 16 16"><path d="M1.500 2h13v10h-13zM4 9l3-3 2 2M11 11a2.500 2.500 0 1 0 0 5a2.500 2.500 0 1 0 0-5" stroke="rgba(0,0,0,.88)" stroke-width="1.500" fill="none"/></svg><div class="t" style="left:18.1px;top:358.0px;font-size:7.8px;color:rgba(0,0,0,.88)">Locale tester</div><svg class="abs" style="left:6.5px;top:379.2px" width="8" height="8" viewBox="0 0 16 16"><path d="M8 1.500a6.500 6.500 0 1 0 0 13a6.500 6.500 0 1 0 0-13M1.500 8h13M8 1.500c-3 2-3 11 0 13M8 1.500c3 2 3 11 0 13" stroke="rgba(0,0,0,.88)" stroke-width="1.500" fill="none"/></svg><div class="t" style="left:18.1px;top:379.4px;font-size:7.8px;color:rgba(0,0,0,.88)">Localization</div><svg class="abs" style="left:6.5px;top:400.6px" width="8" height="8" viewBox="0 0 16 16"><path d="M3 1.500h7l3 3v10H3zM5 7h4M5 9.500h6" stroke="rgba(0,0,0,.88)" stroke-width="1.500" fill="none"/></svg><div class="t" style="left:18.1px;top:400.8px;font-size:7.8px;color:rgba(0,0,0,.88)">Logger</div><svg class="abs" style="left:6.5px;top:421.7px" width="8" height="8" viewBox="0 0 16 16"><path d="M8 1.500a5 5 0 0 0-5 5c0 3.500 5 8 5 8s5-4.500 5-8a5 5 0 0 0-5-5M8 4.500a2 2 0 1 0 0 4a2 2 0 1 0 0-4" stroke="rgba(0,0,0,.88)" stroke-width="1.500" fill="none"/></svg><div class="t" style="left:18.1px;top:421.9px;font-size:7.8px;color:rgba(0,0,0,.88)">Map manager</div><svg class="abs" style="left:6.5px;top:442.6px" width="8" height="8" viewBox="0 0 16 16"><path d="M2 10a4 4 0 0 1 2-7a4.500 4.500 0 0 1 8 0a4 4 0 0 1 2 7M8 7v7M6 12l2 2 2-2" stroke="rgba(0,0,0,.88)" stroke-width="1.500" fill="none"/></svg><div class="t" style="left:18.1px;top:442.8px;font-size:7.8px;color:rgba(0,0,0,.88)">Migration manager</div><div class="t" style="left:118.6px;top:33.1px;font-size:10.5px;font-weight:700;letter-spacing:0">Workflow</div><div class="t" style="left:122.7px;top:64.9px;font-size:7.8px;color:#1677ff">All</div><svg class="abs" style="left:143px;top:65.7px" width="6" height="6" viewBox="0 0 10 10"><path d="M5 0v10M0 5h10" stroke="rgba(0,0,0,.88)" stroke-width="1.400"/></svg><div class="abs" style="left:127.3px;top:87.1px;width:44.2px;height:14.5px;border:.6px solid #d9d9d9;border-radius:3.500px;background:#fff"></div><svg class="abs" style="left:133.7px;top:91px" width="7" height="7.500" viewBox="0 0 17 18"><path d="M1.500 1.500h14l-4.700 8.500v6.500H6.200V10Z M6.200 10h4.600" fill="none" stroke="rgba(0,0,0,.88)" stroke-width="1.800" stroke-linejoin="round"/></svg><div class="t" style="left:147.8px;top:90.7px;font-size:7.8px;">Filter</div><div class="abs" style="left:637.2px;top:87.3px;width:54.2px;height:14.7px;border:.6px solid #d9d9d9;border-radius:3.500px;background:#fff"></div><svg class="abs" style="left:644.3px;top:90.8px" width="7.500" height="7.500" viewBox="0 0 16 16"><path d="M13.500 5A6.300 6.300 0 1 0 14.300 8" fill="none" stroke="rgba(0,0,0,.88)" stroke-width="1.500"/><path d="M14 2v3.500h-3.500" fill="none" stroke="rgba(0,0,0,.88)" stroke-width="1.500"/></svg><div class="t" style="left:658.2px;top:90.8px;font-size:7.8px;">Refresh</div><div class="abs" style="left:694.2px;top:87.3px;width:50.0px;height:14.7px;border:.6px solid #d9d9d9;border-radius:3.500px;background:#fff"></div><svg class="abs" style="left:701px;top:90.8px" width="7.500" height="7.500" viewBox="0 0 16 16"><path d="M2 4h12M6 4V2h4v2M3.500 4l.8 10.500h7.400L12.500 4" fill="none" stroke="rgba(0,0,0,.88)" stroke-width="1.500"/></svg><div class="t" style="left:715px;top:90.8px;font-size:7.8px;">Delete</div><div class="abs" style="left:746.9px;top:87.3px;width:58.0px;height:14.7px;border-radius:3.500px;background:#1677ff"></div><svg class="abs" style="left:753.6px;top:91.4px" width="6.500" height="6.500" viewBox="0 0 10 10"><path d="M5 0v10M0 5h10" stroke="#fff" stroke-width="1.200"/></svg><div class="t" style="left:767.7px;top:90.8px;font-size:7.8px;color:#fff">Add new</div><div class="abs" style="left:138.3px;top:117.1px;width:8px;height:8px;border:.6px solid #d9d9d9;border-radius:50%"></div><div class="t" style="left:162.7px;top:117.4px;font-size:7.7px;font-weight:700;letter-spacing:0">Title</div><div class="t" style="left:312.8px;top:117.4px;font-size:7.7px;font-weight:700;letter-spacing:0">Category</div><div class="t" style="left:365.3px;top:117.4px;font-size:7.7px;font-weight:700;letter-spacing:0">Trigger type</div><div class="t" style="left:467.6px;top:117.4px;font-size:7.7px;font-weight:700;letter-spacing:0">Execute mode</div><div class="t" style="left:551.8px;top:117.4px;font-size:7.7px;font-weight:700;letter-spacing:0">Status</div><div class="t" style="left:591.6px;top:117.4px;font-size:7.7px;font-weight:700;letter-spacing:0">Executed</div><div class="t" style="left:644.4px;top:117.4px;font-size:7.7px;font-weight:700;letter-spacing:0">Actions</div><div class="abs" style="left:128px;top:131.3px;width:676px;height:0.6px;background:#f0f0f0"></div><div class="t" style="left:132.3px;width:20px;text-align:center;top:139.6px;font-size:7.800px">1</div><div class="t" style="left:162.7px;top:139.6px;font-size:7.8px;">Refresh Date</div><div class="tg gold" style="left:365.3px;top:137.2px;width:56.3px">Schedule event</div><div class="tg cyan" style="left:466.8px;top:137.2px;width:58.700px">Asynchronously</div><div class="tg on" style="left:551.8px;top:137.2px;width:17.300px">On</div><div class="t" style="left:591.6px;top:139.6px;font-size:7.8px;color:#1677ff">15</div><div class="t" style="left:644.4px;top:139.6px;font-size:7.8px;color:#1677ff">Configure</div><div class="t" style="left:686px;top:139.6px;font-size:7.8px;color:#1677ff">Edit</div><div class="t" style="left:706.5px;top:139.6px;font-size:7.8px;color:#1677ff">Duplicate</div><div class="t" style="left:747.4px;top:139.6px;font-size:7.8px;color:#1677ff">Delete</div><div class="abs" style="left:128px;top:153.2px;width:676px;height:0.6px;background:#f0f0f0"></div><div class="t" style="left:132.3px;width:20px;text-align:center;top:161.2px;font-size:7.800px">2</div><div class="t" style="left:162.7px;top:161.2px;font-size:7.8px;">Testing</div><div class="tg gold" style="left:365.3px;top:158.8px;width:73px">Custom action event</div><div class="tg cyan" style="left:466.8px;top:158.8px;width:58.700px">Asynchronously</div><div class="tg off" style="left:551.8px;top:158.8px;width:18px">Off</div><div class="t" style="left:591.6px;top:161.2px;font-size:7.8px;color:#1677ff">1</div><div class="t" style="left:644.4px;top:161.2px;font-size:7.8px;color:#1677ff">Configure</div><div class="t" style="left:686px;top:161.2px;font-size:7.8px;color:#1677ff">Edit</div><div class="t" style="left:706.5px;top:161.2px;font-size:7.8px;color:#1677ff">Duplicate</div><div class="t" style="left:747.4px;top:161.2px;font-size:7.8px;color:#1677ff">Delete</div><div class="abs" style="left:128px;top:174.8px;width:676px;height:0.6px;background:#f0f0f0"></div><div class="t" style="left:132.3px;width:20px;text-align:center;top:182.8px;font-size:7.800px">3</div><div class="t" style="left:162.7px;top:182.8px;font-size:7.8px;">Overall Analytics</div><div class="tg gold" style="left:365.3px;top:180.4px;width:66.3px">AI employee event</div><div class="tg org" style="left:466.8px;top:180.4px;width:55px">Synchronously</div><div class="tg on" style="left:551.8px;top:180.4px;width:17.300px">On</div><div class="t" style="left:591.6px;top:182.8px;font-size:7.8px;color:#1677ff">30</div><div class="t" style="left:644.4px;top:182.8px;font-size:7.8px;color:#1677ff">Configure</div><div class="t" style="left:686px;top:182.8px;font-size:7.8px;color:#1677ff">Edit</div><div class="t" style="left:706.5px;top:182.8px;font-size:7.8px;color:#1677ff">Duplicate</div><div class="t" style="left:747.4px;top:182.8px;font-size:7.8px;color:#1677ff">Delete</div><div class="abs" style="left:128px;top:196.4px;width:676px;height:0.6px;background:#f0f0f0"></div><div class="t" style="left:132.3px;width:20px;text-align:center;top:204.5px;font-size:7.800px">4</div><div class="t" style="left:162.7px;top:204.5px;font-size:7.8px;">SQL Execution</div><div class="tg gold" style="left:365.3px;top:202.1px;width:66.3px">AI employee event</div><div class="tg org" style="left:466.8px;top:202.1px;width:55px">Synchronously</div><div class="tg on" style="left:551.8px;top:202.1px;width:17.300px">On</div><div class="t" style="left:591.6px;top:204.5px;font-size:7.8px;color:#1677ff">28</div><div class="t" style="left:644.4px;top:204.5px;font-size:7.8px;color:#1677ff">Configure</div><div class="t" style="left:686px;top:204.5px;font-size:7.8px;color:#1677ff">Edit</div><div class="t" style="left:706.5px;top:204.5px;font-size:7.8px;color:#1677ff">Duplicate</div><div class="t" style="left:747.4px;top:204.5px;font-size:7.8px;color:#1677ff">Delete</div><div class="abs" style="left:128px;top:218.1px;width:676px;height:0.6px;background:#f0f0f0"></div><div class="t" style="left:132.3px;width:20px;text-align:center;top:226.1px;font-size:7.800px">5</div><div class="t" style="left:162.7px;top:226.1px;font-size:7.8px;">Sprint Calculation</div><div class="tg gold" style="left:365.3px;top:223.7px;width:58.5px">Collection event</div><div class="tg cyan" style="left:466.8px;top:223.7px;width:58.700px">Asynchronously</div><div class="tg on" style="left:551.8px;top:223.7px;width:17.300px">On</div><div class="t" style="left:591.6px;top:226.1px;font-size:7.8px;color:#1677ff">1</div><div class="t" style="left:644.4px;top:226.1px;font-size:7.8px;color:#1677ff">Configure</div><div class="t" style="left:686px;top:226.1px;font-size:7.8px;color:#1677ff">Edit</div><div class="t" style="left:706.5px;top:226.1px;font-size:7.8px;color:#1677ff">Duplicate</div><div class="t" style="left:747.4px;top:226.1px;font-size:7.8px;color:#1677ff">Delete</div><div class="abs" style="left:128px;top:239.7px;width:676px;height:0.6px;background:#f0f0f0"></div><div class="t" style="left:132.3px;width:20px;text-align:center;top:247.7px;font-size:7.800px">6</div><div class="t" style="left:162.7px;top:247.7px;font-size:7.8px;">Switch Project</div><div class="tg gold" style="left:365.3px;top:245.3px;width:73px">Custom action event</div><div class="tg org" style="left:466.8px;top:245.3px;width:55px">Synchronously</div><div class="tg on" style="left:551.8px;top:245.3px;width:17.300px">On</div><div class="t" style="left:591.6px;top:247.7px;font-size:7.8px;color:#1677ff">3</div><div class="t" style="left:644.4px;top:247.7px;font-size:7.8px;color:#1677ff">Configure</div><div class="t" style="left:686px;top:247.7px;font-size:7.8px;color:#1677ff">Edit</div><div class="t" style="left:706.5px;top:247.7px;font-size:7.8px;color:#1677ff">Duplicate</div><div class="t" style="left:747.4px;top:247.7px;font-size:7.8px;color:#1677ff">Delete</div><div class="abs" style="left:128px;top:261.3px;width:676px;height:0.6px;background:#f0f0f0"></div><div class="t" style="left:132.3px;width:20px;text-align:center;top:269.3px;font-size:7.800px">7</div><div class="t" style="left:162.7px;top:269.3px;font-size:7.8px;">Transfer: Leads to Opportunities</div><div class="tg gold" style="left:365.3px;top:266.9px;width:63.5px">Post-action event</div><div class="tg cyan" style="left:466.8px;top:266.9px;width:58.700px">Asynchronously</div><div class="tg on" style="left:551.8px;top:266.9px;width:17.300px">On</div><div class="t" style="left:591.6px;top:269.3px;font-size:7.8px;color:#1677ff">21</div><div class="t" style="left:644.4px;top:269.3px;font-size:7.8px;color:#1677ff">Configure</div><div class="t" style="left:686px;top:269.3px;font-size:7.8px;color:#1677ff">Edit</div><div class="t" style="left:706.5px;top:269.3px;font-size:7.8px;color:#1677ff">Duplicate</div><div class="t" style="left:747.4px;top:269.3px;font-size:7.8px;color:#1677ff">Delete</div><div class="abs" style="left:128px;top:282.9px;width:676px;height:0.6px;background:#f0f0f0"></div><div class="t" style="left:132.3px;width:20px;text-align:center;top:290.9px;font-size:7.800px">8</div><div class="t" style="left:162.7px;top:290.9px;font-size:7.8px;">Order Approval</div><div class="tg gold" style="left:365.3px;top:288.5px;width:54.5px">Approval event</div><div class="tg cyan" style="left:466.8px;top:288.5px;width:58.700px">Asynchronously</div><div class="tg on" style="left:551.8px;top:288.5px;width:17.300px">On</div><div class="t" style="left:591.6px;top:290.9px;font-size:7.8px;color:#1677ff">8</div><div class="t" style="left:644.4px;top:290.9px;font-size:7.8px;color:#1677ff">Configure</div><div class="t" style="left:686px;top:290.9px;font-size:7.8px;color:#1677ff">Edit</div><div class="t" style="left:706.5px;top:290.9px;font-size:7.8px;color:#1677ff">Duplicate</div><div class="t" style="left:747.4px;top:290.9px;font-size:7.8px;color:#1677ff">Delete</div><div class="abs" style="left:128px;top:304.5px;width:676px;height:0.6px;background:#f0f0f0"></div><div class="t" style="left:132.3px;width:20px;text-align:center;top:312.6px;font-size:7.800px">9</div><div class="t" style="left:162.7px;top:312.6px;font-size:7.8px;">Tickets create</div><div class="tg gold" style="left:365.3px;top:310.2px;width:58.5px">Collection event</div><div class="tg cyan" style="left:466.8px;top:310.2px;width:58.700px">Asynchronously</div><div class="tg on" style="left:551.8px;top:310.2px;width:17.300px">On</div><div class="t" style="left:591.6px;top:312.6px;font-size:7.8px;color:#1677ff">1</div><div class="t" style="left:644.4px;top:312.6px;font-size:7.8px;color:#1677ff">Configure</div><div class="t" style="left:686px;top:312.6px;font-size:7.8px;color:#1677ff">Edit</div><div class="t" style="left:706.5px;top:312.6px;font-size:7.8px;color:#1677ff">Duplicate</div><div class="t" style="left:747.4px;top:312.6px;font-size:7.8px;color:#1677ff">Delete</div><div class="abs" style="left:128px;top:326.2px;width:676px;height:0.6px;background:#f0f0f0"></div><div class="t" style="left:132.3px;width:20px;text-align:center;top:334.2px;font-size:7.800px">10</div><div class="t" style="left:162.7px;top:334.2px;font-size:7.8px;">SLA Tech Notification</div><div class="tg gold" style="left:365.3px;top:331.8px;width:56.3px">Schedule event</div><div class="tg cyan" style="left:466.8px;top:331.8px;width:58.700px">Asynchronously</div><div class="tg on" style="left:551.8px;top:331.8px;width:17.300px">On</div><div class="t" style="left:591.6px;top:334.2px;font-size:7.8px;color:#1677ff">10</div><div class="t" style="left:644.4px;top:334.2px;font-size:7.8px;color:#1677ff">Configure</div><div class="t" style="left:686px;top:334.2px;font-size:7.8px;color:#1677ff">Edit</div><div class="t" style="left:706.5px;top:334.2px;font-size:7.8px;color:#1677ff">Duplicate</div><div class="t" style="left:747.4px;top:334.2px;font-size:7.8px;color:#1677ff">Delete</div><div class="abs" style="left:128px;top:347.8px;width:676px;height:0.6px;background:#f0f0f0"></div><div class="t" style="left:132.3px;width:20px;text-align:center;top:355.8px;font-size:7.800px">11</div><div class="t" style="left:162.7px;top:355.8px;font-size:7.8px;">SLA Sales Notification</div><div class="tg gold" style="left:365.3px;top:353.4px;width:56.3px">Schedule event</div><div class="tg cyan" style="left:466.8px;top:353.4px;width:58.700px">Asynchronously</div><div class="tg on" style="left:551.8px;top:353.4px;width:17.300px">On</div><div class="t" style="left:591.6px;top:355.8px;font-size:7.8px;color:#1677ff">10</div><div class="t" style="left:644.4px;top:355.8px;font-size:7.8px;color:#1677ff">Configure</div><div class="t" style="left:686px;top:355.8px;font-size:7.8px;color:#1677ff">Edit</div><div class="t" style="left:706.5px;top:355.8px;font-size:7.8px;color:#1677ff">Duplicate</div><div class="t" style="left:747.4px;top:355.8px;font-size:7.8px;color:#1677ff">Delete</div><div class="abs" style="left:128px;top:369.4px;width:676px;height:0.6px;background:#f0f0f0"></div><div class="t" style="left:132.3px;width:20px;text-align:center;top:377.4px;font-size:7.800px">12</div><div class="t" style="left:162.7px;top:377.4px;font-size:7.8px;">Tickets assign notification</div><div class="tg gold" style="left:365.3px;top:375.0px;width:58.5px">Collection event</div><div class="tg cyan" style="left:466.8px;top:375.0px;width:58.700px">Asynchronously</div><div class="tg on" style="left:551.8px;top:375.0px;width:17.300px">On</div><div class="t" style="left:591.6px;top:377.4px;font-size:7.8px;color:#1677ff">1</div><div class="t" style="left:644.4px;top:377.4px;font-size:7.8px;color:#1677ff">Configure</div><div class="t" style="left:686px;top:377.4px;font-size:7.8px;color:#1677ff">Edit</div><div class="t" style="left:706.5px;top:377.4px;font-size:7.8px;color:#1677ff">Duplicate</div><div class="t" style="left:747.4px;top:377.4px;font-size:7.8px;color:#1677ff">Delete</div><div class="abs" style="left:128px;top:391.0px;width:676px;height:0.6px;background:#f0f0f0"></div><div class="t" style="left:132.3px;width:20px;text-align:center;top:399.0px;font-size:7.800px">13</div><div class="t" style="left:162.7px;top:399.0px;font-size:7.8px;">Mail received</div><div class="tg gold" style="left:365.3px;top:396.6px;width:58.5px">Collection event</div><div class="tg cyan" style="left:466.8px;top:396.6px;width:58.700px">Asynchronously</div><div class="tg on" style="left:551.8px;top:396.6px;width:17.300px">On</div><div class="t" style="left:591.6px;top:399.0px;font-size:7.8px;color:#1677ff">2</div><div class="t" style="left:644.4px;top:399.0px;font-size:7.8px;color:#1677ff">Configure</div><div class="t" style="left:686px;top:399.0px;font-size:7.8px;color:#1677ff">Edit</div><div class="t" style="left:706.5px;top:399.0px;font-size:7.8px;color:#1677ff">Duplicate</div><div class="t" style="left:747.4px;top:399.0px;font-size:7.8px;color:#1677ff">Delete</div><div class="abs" style="left:128px;top:412.6px;width:676px;height:0.6px;background:#f0f0f0"></div><div class="t" style="left:132.3px;width:20px;text-align:center;top:420.7px;font-size:7.800px">14</div><div class="t" style="left:162.7px;top:420.7px;font-size:7.8px;">Task Reminder</div><div class="tg gold" style="left:365.3px;top:418.3px;width:56.3px">Schedule event</div><div class="tg cyan" style="left:466.8px;top:418.3px;width:58.700px">Asynchronously</div><div class="tg on" style="left:551.8px;top:418.3px;width:17.300px">On</div><div class="t" style="left:591.6px;top:420.7px;font-size:7.8px;color:#1677ff">0</div><div class="t" style="left:644.4px;top:420.7px;font-size:7.8px;color:#1677ff">Configure</div><div class="t" style="left:686px;top:420.7px;font-size:7.8px;color:#1677ff">Edit</div><div class="t" style="left:706.5px;top:420.7px;font-size:7.8px;color:#1677ff">Duplicate</div><div class="t" style="left:747.4px;top:420.7px;font-size:7.8px;color:#1677ff">Delete</div><div class="abs" style="left:128px;top:434.3px;width:676px;height:0.6px;background:#f0f0f0"></div><div class="t" style="left:132.3px;width:20px;text-align:center;top:442.3px;font-size:7.800px">15</div><div class="t" style="left:162.7px;top:442.3px;font-size:7.8px;">Add: Account</div><div class="tg gold" style="left:365.3px;top:439.9px;width:73px">Custom action event</div><div class="tg cyan" style="left:466.8px;top:439.9px;width:58.700px">Asynchronously</div><div class="tg off" style="left:551.8px;top:439.9px;width:18px">Off</div><div class="t" style="left:591.6px;top:442.3px;font-size:7.8px;color:#1677ff">3</div><div class="t" style="left:644.4px;top:442.3px;font-size:7.8px;color:#1677ff">Configure</div><div class="t" style="left:686px;top:442.3px;font-size:7.8px;color:#1677ff">Edit</div><div class="t" style="left:706.5px;top:442.3px;font-size:7.8px;color:#1677ff">Duplicate</div><div class="t" style="left:747.4px;top:442.3px;font-size:7.8px;color:#1677ff">Delete</div><div class="abs" style="left:128px;top:455.9px;width:676px;height:0.6px;background:#f0f0f0"></div><div class="abs" style="left:767.5px;top:411.5px;width:54.5px;height:52.5px;background:#fff;border-radius:6px;box-shadow:0 1px 6px rgba(0,0,0,.15)"></div><svg class="abs" style="left:772px;top:426.5px" width="4" height="6" viewBox="0 0 6 10"><path d="M1 1l4 4-4 4" stroke="#333" stroke-width="1.300" fill="none"/></svg><svg class="abs" style="left:790.6px;top:415px" width="28" height="28" viewBox="0 0 64 64"><defs><linearGradient id="avgB" x1="0.85" y1="0.1" x2="0.2" y2="0.9"><stop offset="0" stop-color="#7d57f5"/><stop offset=".5" stop-color="#b184f2"/><stop offset="1" stop-color="#f2b4ec"/></linearGradient><clipPath id="avcB"><circle cx="32" cy="32" r="32"/></clipPath></defs><circle cx="32" cy="32" r="32" fill="url(#avgB)"/><g clip-path="url(#avcB)"><path d="M2 47 9 44.500 17.500 46.500 15 57 8 60-2 56Z" fill="#7856f3"/><path d="M1.500 31c-.5-3 2-5 5-5 2-1.500 5-1.500 7 0 2-.5 4 .5 4 2.500l-1.500 3.500-2-1.500-2 .5-2.500-1.500-2 1.500c-1 3-.5 6.500 1.500 9 1.500 1.500 4 2 6 1.500l1 1.500c-2.500 1.800-6.500 1.600-9-.5-1.500-1-2-2.500-2.500-4-1.500-2-2.500-5-2-7.500Z" fill="#4a3a7e"/><path d="M7.300 33.500c.5-1 1.500-1.500 2.500-1.500l2 .8 2-.5 1.800 1c.4 2.800 0 6-1.800 7.800-2 .6-4 0-5.300-1.600-1.400-1.700-1.700-4-1.200-6Z" fill="#c4a9f2"/><path d="M45 50c2-3 6-5 10-5s8 1 10 4v15H44Z" fill="#c9a6f0"/><path d="M45.500 36c0-6 4-9.800 9-9.800 5 0 8.500 3.500 8.500 8.500 0 3-.5 6-2 8l-2.500-.5 1-6-3-3.500-6.500.8-1 4.500 1 5-4 .5c-.5-2.500-.5-5-.5-7.500Z" fill="#4a3a7e"/><path d="M49.500 33.500l6.500-.8 3.500 2.500c.6 3.500-.2 7-3 8.300-2.500.8-5.300-.3-6.500-2.500-1-2.300-1-5-.5-7.500Z" fill="#d5bcf7"/><path d="M12.500 57.500c3-5 9-7.500 14.500-9v-6h10.500v6c5 1.500 10 4 12.500 8.500l1.500 8H10Z" fill="#e2bdf3"/><path d="M19.800 37c-1.500-10 3.500-18.500 12.500-18.300 3 0 5 1 6.500 2.200 3.500 0 6 3 5.500 6.500.5 2.500-.8 4.500-2.500 5.500l-1.500-4.500-4.500 1.500-3-2-4.500 3-3-1.500-1 9c.5 3 .5 6.500-1 8.500-2.500-1-3.500-5-3.500-9.900Z" fill="#4a3a7e"/><path d="M22.800 31 25.800 29.400 28.800 30.900 33.300 27.900 36.300 29.900 40.800 28.400 41.800 32c.5 4.500-1 8.500-4.500 10.300-3 1.300-7 1.200-10-.3-3-2-4.800-6-4.500-11Z" fill="#ccaef5"/><path d="M32.500 42.500c3 1 6.500.8 9.500-.8 5 2.500 9.500 7 10.500 12.500l-4.500 5c-.5-6-3.500-10-8-12.500-3-.8-5.500-2-7.500-4.200Z" fill="#4a3a7e"/><circle cx="22" cy="37.500" r="1.900" fill="none" stroke="#f3e6fc" stroke-width="1"/></g></svg><!--E--></div>
    </div>
  </div>
<svg class="abs" style="left:275.500px;top:410px;filter:drop-shadow(0 1px 1.200px rgba(0,0,0,.35))" width="16" height="22" viewBox="0 0 16 22"><path d="M2.500 2.500v13.200l3.100-2.900 2.700 6 2.600-1.200-2.700-5.800h4.300Z" fill="#000" stroke="#fff" stroke-width="1.100" stroke-linejoin="round"/></svg>
  <div id="sb"><div></div></div>
  <div id="ai"><svg class="abs" style="left:10px;top:30.500px" width="9" height="14" viewBox="0 0 9 14"><path d="M1 1l6.800 6L1 13" fill="none" stroke="#111" stroke-width="1.500"/></svg><div class="abs" style="left:37.500px;top:8px;width:1px;height:59px;background:#f0f0f0"></div><svg class="abs" style="left:54.500px;top:5.800px" width="63.500" height="63.500" viewBox="0 0 64 64"><defs><linearGradient id="avgA" x1="0.85" y1="0.1" x2="0.2" y2="0.9"><stop offset="0" stop-color="#7d57f5"/><stop offset=".5" stop-color="#b184f2"/><stop offset="1" stop-color="#f2b4ec"/></linearGradient><clipPath id="avcA"><circle cx="32" cy="32" r="32"/></clipPath></defs><circle cx="32" cy="32" r="32" fill="url(#avgA)"/><g clip-path="url(#avcA)"><path d="M2 47 9 44.500 17.500 46.500 15 57 8 60-2 56Z" fill="#7856f3"/><path d="M1.500 31c-.5-3 2-5 5-5 2-1.500 5-1.500 7 0 2-.5 4 .5 4 2.500l-1.500 3.500-2-1.500-2 .5-2.500-1.500-2 1.500c-1 3-.5 6.500 1.500 9 1.500 1.500 4 2 6 1.500l1 1.500c-2.500 1.800-6.500 1.600-9-.5-1.500-1-2-2.500-2.500-4-1.500-2-2.500-5-2-7.500Z" fill="#4a3a7e"/><path d="M7.300 33.500c.5-1 1.500-1.500 2.500-1.500l2 .8 2-.5 1.800 1c.4 2.800 0 6-1.800 7.800-2 .6-4 0-5.300-1.600-1.400-1.700-1.700-4-1.200-6Z" fill="#c4a9f2"/><path d="M45 50c2-3 6-5 10-5s8 1 10 4v15H44Z" fill="#c9a6f0"/><path d="M45.500 36c0-6 4-9.800 9-9.800 5 0 8.500 3.500 8.500 8.500 0 3-.5 6-2 8l-2.500-.5 1-6-3-3.500-6.500.8-1 4.500 1 5-4 .5c-.5-2.500-.5-5-.5-7.500Z" fill="#4a3a7e"/><path d="M49.500 33.500l6.500-.8 3.500 2.500c.6 3.500-.2 7-3 8.300-2.500.8-5.300-.3-6.500-2.500-1-2.300-1-5-.5-7.500Z" fill="#d5bcf7"/><path d="M12.500 57.500c3-5 9-7.500 14.500-9v-6h10.500v6c5 1.500 10 4 12.500 8.500l1.500 8H10Z" fill="#e2bdf3"/><path d="M19.800 37c-1.500-10 3.500-18.500 12.500-18.300 3 0 5 1 6.500 2.200 3.500 0 6 3 5.500 6.500.5 2.500-.8 4.500-2.500 5.500l-1.500-4.500-4.500 1.500-3-2-4.500 3-3-1.500-1 9c.5 3 .5 6.500-1 8.500-2.500-1-3.500-5-3.500-9.900Z" fill="#4a3a7e"/><path d="M22.800 31 25.800 29.400 28.800 30.900 33.300 27.900 36.300 29.900 40.800 28.400 41.800 32c.5 4.500-1 8.500-4.500 10.300-3 1.300-7 1.200-10-.3-3-2-4.800-6-4.500-11Z" fill="#ccaef5"/><path d="M32.500 42.500c3 1 6.500.8 9.500-.8 5 2.500 9.500 7 10.500 12.500l-4.500 5c-.5-6-3.500-10-8-12.500-3-.8-5.500-2-7.500-4.200Z" fill="#4a3a7e"/><circle cx="22" cy="37.500" r="1.900" fill="none" stroke="#f3e6fc" stroke-width="1"/></g></svg></div>
</div>
</body>
</html>
